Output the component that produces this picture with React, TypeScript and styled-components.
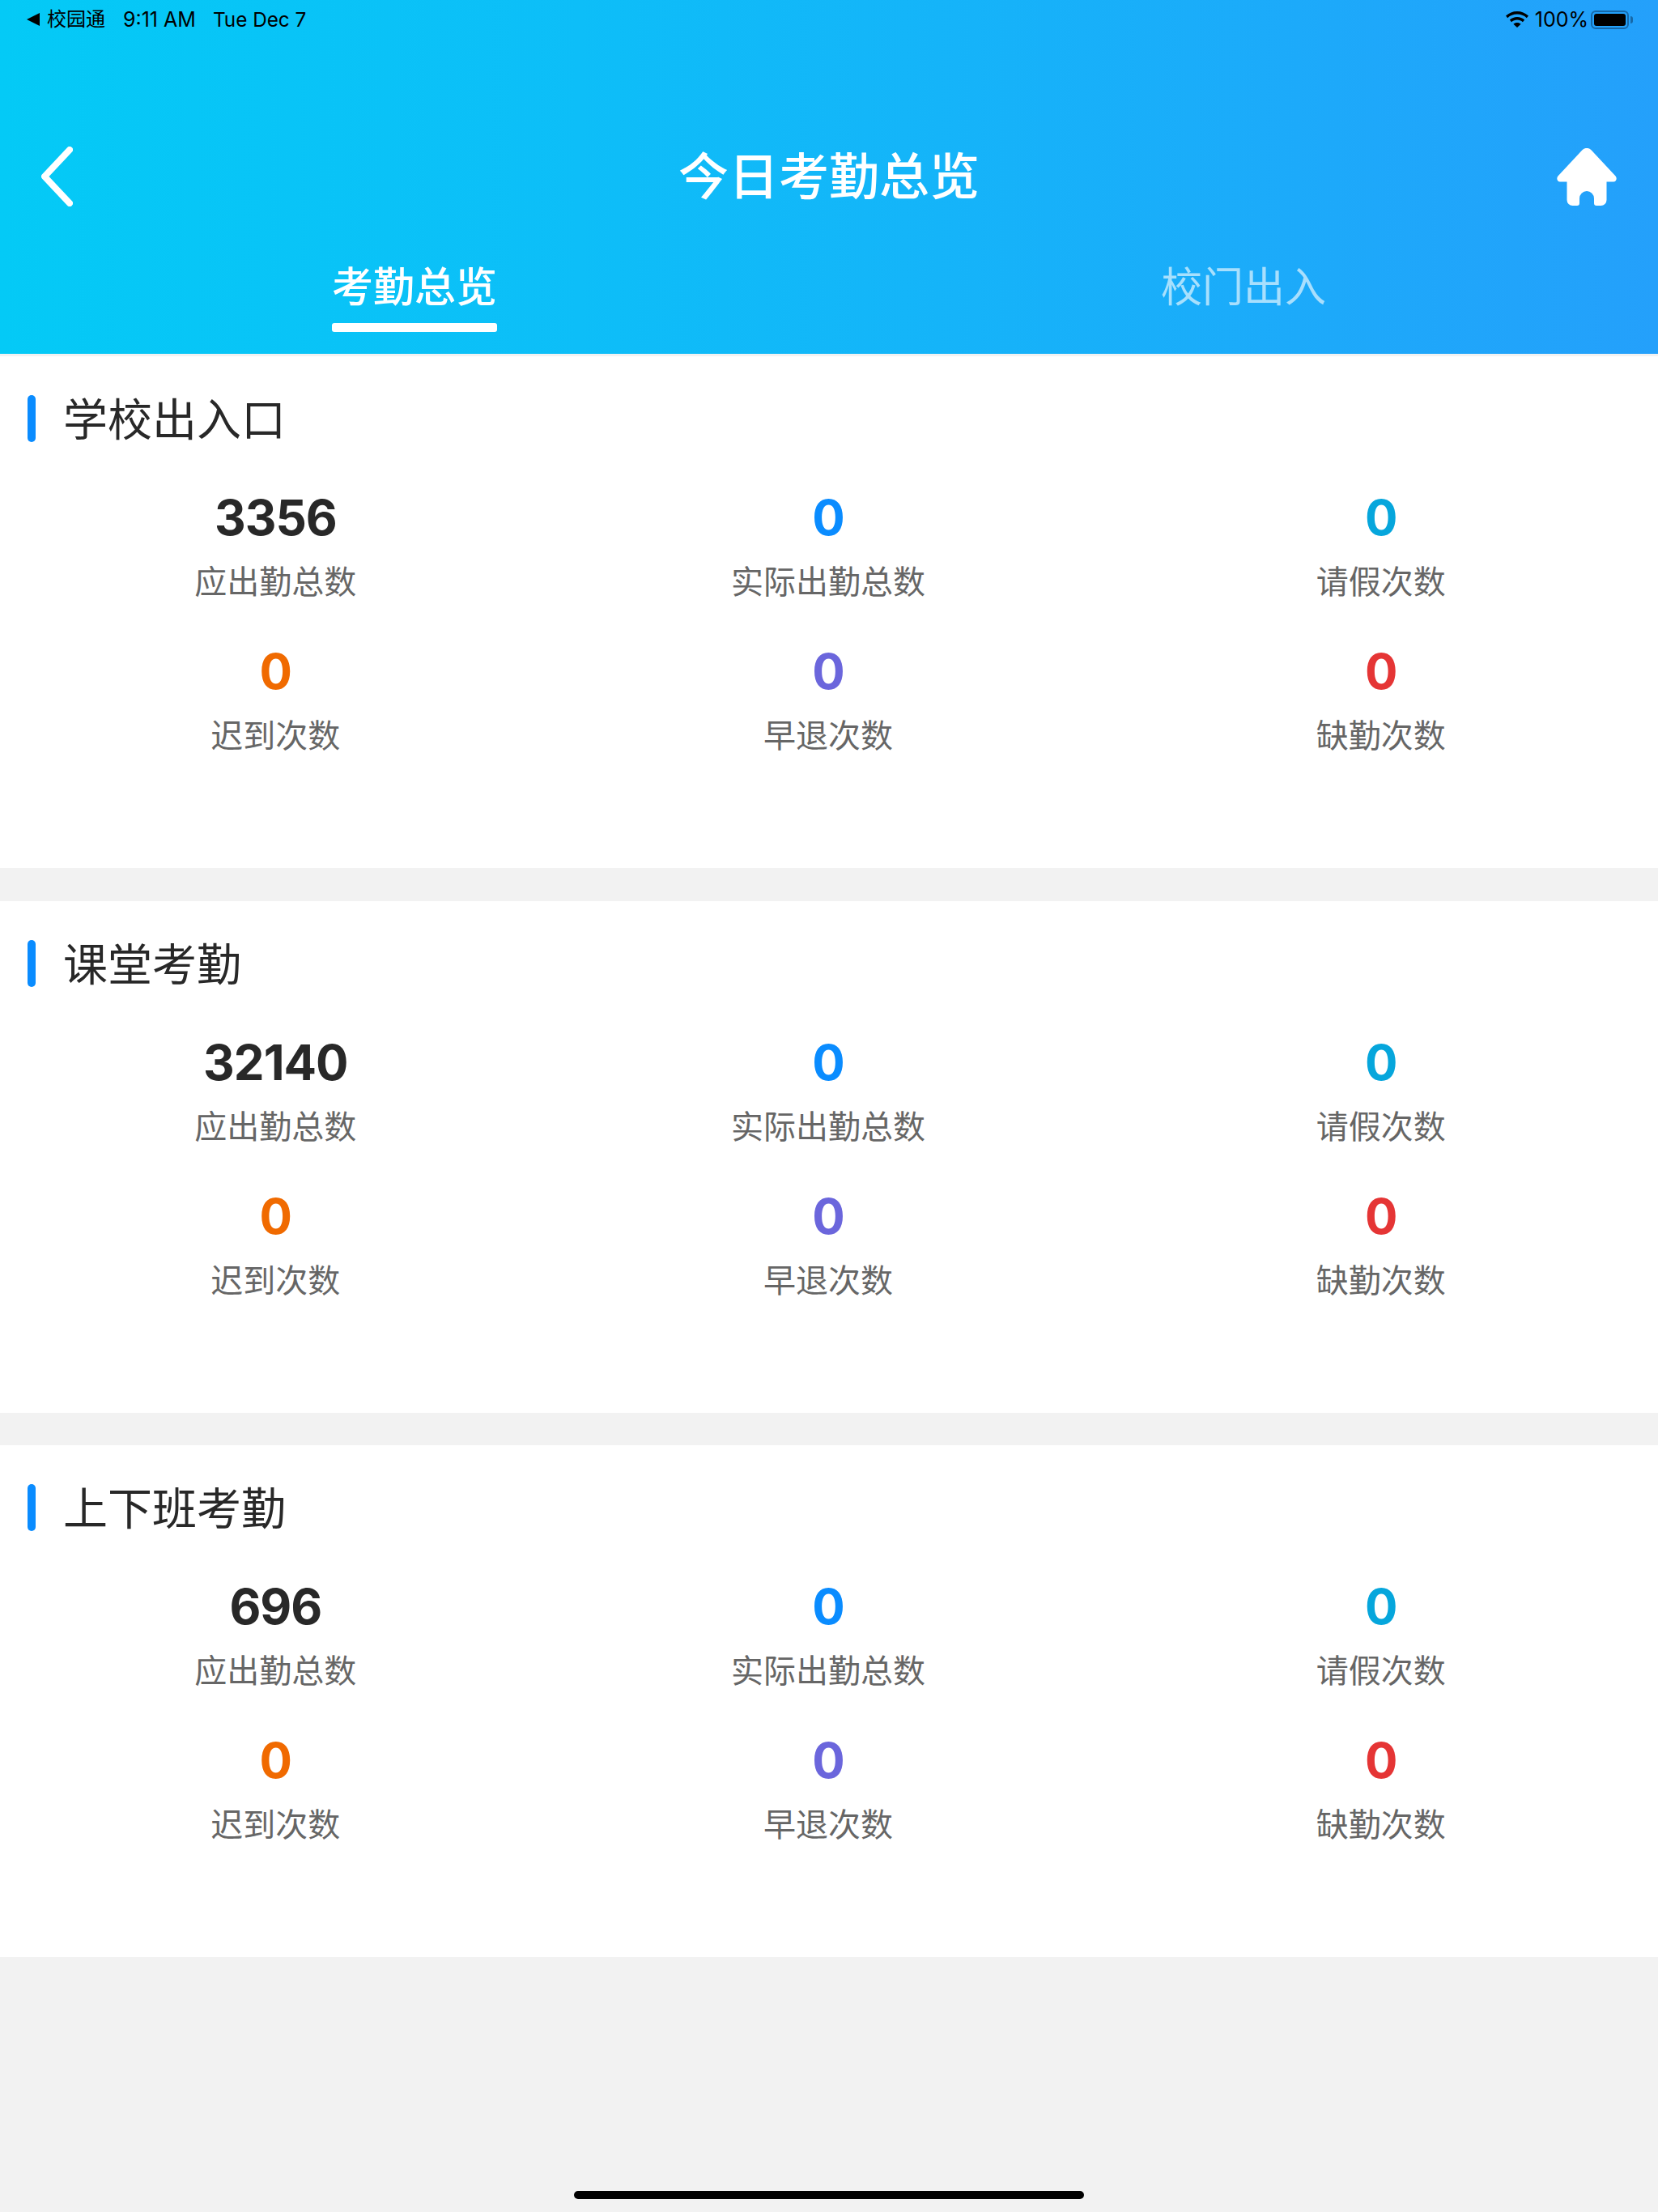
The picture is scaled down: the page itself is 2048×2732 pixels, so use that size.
import React, {FC} from 'react';
import styled, {createGlobalStyle} from 'styled-components';

const colors = {
    blue: '#0a8cff',
    sky: '#06a6dc',
    orange: '#f06a00',
    purple: '#6b66dc',
    red: '#e53535',
    dark: '#282828',
    gray: '#666666',
    bg: '#f2f2f2',
};

const cjk = '"Noto Sans CJK SC", sans-serif';
const latin = 'Inter, "Noto Sans CJK SC", sans-serif';

const GlobalStyle = createGlobalStyle`
    html, body {
        margin: 0;
        padding: 0;
        background: ${colors.bg};
    }
    * {
        box-sizing: border-box;
    }
`;

const Page = styled.div`
    width: 2048px;
    height: 2732px;
    display: flex;
    flex-direction: column;
    background: ${colors.bg};
    font-family: ${cjk};
`;

const Header = styled.header`
    height: 437px;
    display: flex;
    flex-direction: column;
    color: #fff;
    background: linear-gradient(90deg, #04caf6 0%, #0dbef8 35%, #24a0fb 100%);
`;

const StatusBar = styled.div`
    height: 48px;
    padding: 0 36px 0 33px;
    display: flex;
    align-items: center;
    justify-content: space-between;
    color: #000;
    font-family: ${latin};
    font-size: 25px;
`;

const StatusGroup = styled.div`
    display: flex;
    align-items: center;
`;

const BackTriangle = styled.span`
    width: 0;
    height: 0;
    margin-right: 9px;
    border-top: 8px solid transparent;
    border-bottom: 8px solid transparent;
    border-right: 16px solid #000;
`;

const StatusText = styled.span<{$gap?: number}>`
    margin-left: ${p => p.$gap || 0}px;
    line-height: 48px;
    white-space: nowrap;
`;

const CarrierText = styled(StatusText)`
    font-size: 24px;
`;

const DateText = styled(StatusText)`
    font-size: 24.3px;
`;

const Battery = styled.span`
    position: relative;
    width: 47px;
    height: 23px;
    margin-left: 3px;
    padding: 2px;
    display: flex;
    border: 2px solid #1668a8;
    border-radius: 6px;
    &::before {
        content: '';
        flex: 1;
        background: #000;
        border-radius: 3px;
    }
    &::after {
        content: '';
        position: absolute;
        right: -7px;
        top: 5px;
        width: 3px;
        height: 9px;
        background: #1668a8;
        border-radius: 0 3px 3px 0;
    }
`;

const NavRow = styled.div`
    height: 196px;
    margin-top: 72px;
    padding: 0 51px;
    display: grid;
    grid-template-columns: 1fr auto 1fr;
    align-items: center;
`;

const HomeSlot = styled.div`
    display: flex;
    justify-content: flex-end;
`;

const Title = styled.h1`
    margin: 0 0 9px;
    font-size: 62px;
    font-weight: 500;
    line-height: 80px;
`;

const Tabs = styled.div`
    display: grid;
    grid-template-columns: 1fr 1fr;
`;

const Tab = styled.div<{$active?: boolean}>`
    display: flex;
    flex-direction: column;
    align-items: center;
    font-size: 51px;
    line-height: 70px;
    font-weight: ${p => p.$active ? 500 : 400};
    color: ${p => p.$active ? '#fff' : 'rgba(255,255,255,0.62)'};
`;

const TabBar = styled.span`
    width: 204px;
    height: 11px;
    margin-top: 13px;
    border-radius: 3px;
    background: #fff;
`;

const Sections = styled.main`
    padding-top: 3px;
    display: flex;
    flex-direction: column;
    gap: 40.5px;
`;

const Section = styled.section`
    height: 632px;
    padding: 48px 0 0 34px;
    background: #fff;
`;

const SectionHead = styled.div`
    height: 58px;
    display: flex;
    align-items: center;
    gap: 34px;
`;

const Mark = styled.span`
    width: 10px;
    height: 58px;
    border-radius: 5px;
    background: ${colors.blue};
`;

const SectionTitle = styled.h2`
    margin: -6px 0 0;
    font-size: 55px;
    font-weight: 400;
    line-height: 58px;
    color: ${colors.dark};
`;

const Grid = styled.div`
    margin: 63px 1px 0 -35px;
    display: grid;
    grid-template-columns: repeat(3, 1fr);
    row-gap: 53px;
`;

const Stat = styled.div`
    height: 137px;
    display: flex;
    flex-direction: column;
    align-items: center;
`;

const Value = styled.div<{$color: string}>`
    font-family: ${latin};
    font-size: 60px;
    font-weight: 700;
    line-height: 60px;
    letter-spacing: -1px;
    color: ${p => p.$color};
`;

const Label = styled.div`
    margin-top: 19px;
    font-size: 40px;
    line-height: 56px;
    color: ${colors.gray};
`;

const Spacer = styled.div`
    flex: 1;
`;

const HomeIndicator = styled.div`
    width: 630px;
    height: 10px;
    margin: 0 auto 16px;
    border-radius: 5px;
    background: #000;
`;

const WifiIcon: FC = () => (
    <svg width="28" height="20" viewBox="0 0 28 20">
        <path d="M14 0C8.6 0 4 2 0 5.6l2.2 2.6C5.4 5.2 9.5 3.6 14 3.6s8.6 1.6 11.8 4.6L28 5.6C24 2 19.4 0 14 0z" fill="#000"/>
        <path d="M14 7c-3.6 0-6.6 1.2-9.2 3.6l2.3 2.6C9 11.5 11.4 10.6 14 10.6s5 .9 6.9 2.6l2.3-2.6C20.6 8.2 17.6 7 14 7z" fill="#000"/>
        <path d="M14 14c-1.8 0-3.3.6-4.6 1.8L14 20l4.6-4.2C17.3 14.6 15.8 14 14 14z" fill="#000"/>
    </svg>
);

const BackIcon: FC = () => (
    <svg width="39" height="74" viewBox="0 0 39 74">
        <path d="M35 4 L4 37 L35 70" fill="none" stroke="#fff" strokeWidth="8" strokeLinecap="round" strokeLinejoin="round"/>
    </svg>
);

const HomeIcon: FC = () => (
    <svg width="74" height="71" viewBox="0 0 74 71">
        <path
            d="M31.5 2.3a7.5 7.5 0 0 1 11 0L72.6 34.5c2.2 2.4 1 7-2.6 7H61.5V64a7 7 0 0 1-7 7H49a3 3 0 0 1-3-3V62a9 9 0 0 0-18 0v6a3 3 0 0 1-3 3h-5.500a7 7 0 0 1-7-7V41.500H4c-3.600 0-4.800-4.600-2.600-7z"
            fill="#fff"
        />
    </svg>
);

interface StatItem {
    value: string | number;
    label: string;
    color: string;
}

const buildStats = (total: number): StatItem[] => [
    {value: total, label: '应出勤总数', color: colors.dark},
    {value: 0, label: '实际出勤总数', color: colors.blue},
    {value: 0, label: '请假次数', color: colors.sky},
    {value: 0, label: '迟到次数', color: colors.orange},
    {value: 0, label: '早退次数', color: colors.purple},
    {value: 0, label: '缺勤次数', color: colors.red},
];

const sections = [
    {title: '学校出入口', total: 3356},
    {title: '课堂考勤', total: 32140},
    {title: '上下班考勤', total: 696},
];

const App: FC = () => (
    <Page>
        <GlobalStyle/>
        <Header>
            <StatusBar>
                <StatusGroup>
                    <BackTriangle/>
                    <CarrierText>校园通</CarrierText>
                    <StatusText $gap={22}>9:11 AM</StatusText>
                    <DateText $gap={21}>Tue Dec 7</DateText>
                </StatusGroup>
                <StatusGroup>
                    <WifiIcon/>
                    <StatusText $gap={8}>100%</StatusText>
                    <Battery/>
                </StatusGroup>
            </StatusBar>
            <NavRow>
                <BackIcon/>
                <Title>今日考勤总览</Title>
                <HomeSlot><HomeIcon/></HomeSlot>
            </NavRow>
            <Tabs>
                <Tab $active>考勤总览<TabBar/></Tab>
                <Tab>校门出入</Tab>
            </Tabs>
        </Header>
        <Sections>
            {sections.map(section => (
                <Section key={section.title}>
                    <SectionHead>
                        <Mark/>
                        <SectionTitle>{section.title}</SectionTitle>
                    </SectionHead>
                    <Grid>
                        {buildStats(section.total).map(item => (
                            <Stat key={item.label}>
                                <Value $color={item.color}>{item.value}</Value>
                                <Label>{item.label}</Label>
                            </Stat>
                        ))}
                    </Grid>
                </Section>
            ))}
        </Sections>
        <Spacer/>
        <HomeIndicator/>
    </Page>
);

export default App;
